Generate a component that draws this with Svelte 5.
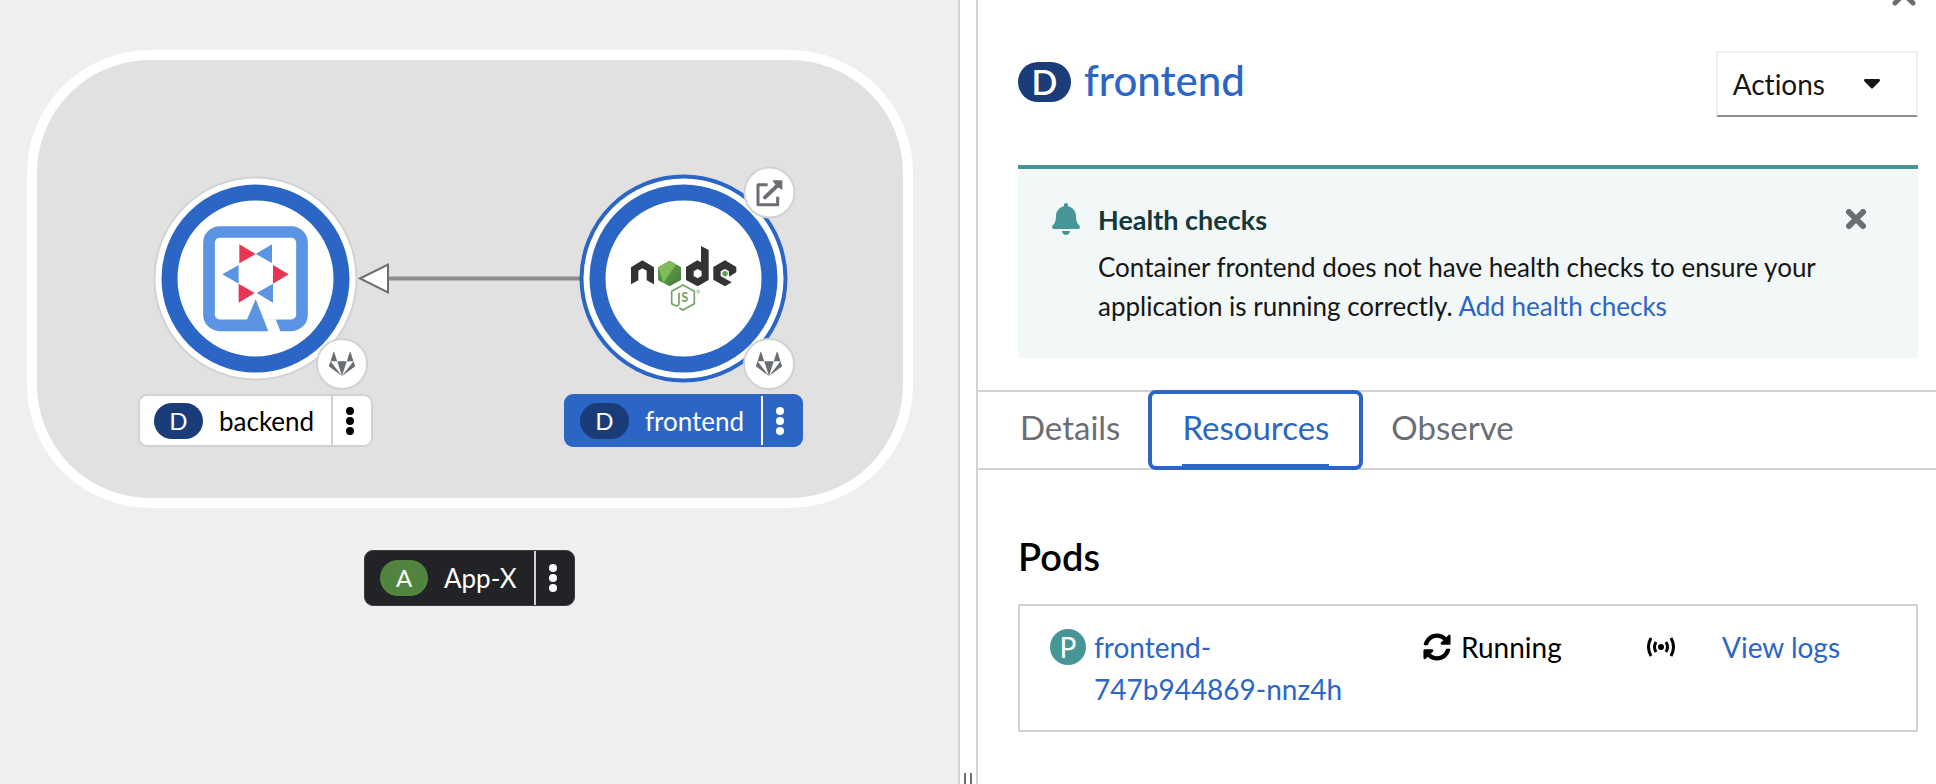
<script>
  const workloads = [
    { name: 'backend', kind: 'D', x: 138, y: 394, selected: false },
    { name: 'frontend', kind: 'D', x: 564, y: 394, selected: true }
  ];
  const sourceBadges = [
    { x: 342, y: 364 },
    { x: 769, y: 364 }
  ];
  const tabs = ['Details', 'Resources', 'Observe'];
  let active = $state('Resources');
</script>

{#snippet kebab()}
  <svg width="10" height="28" viewBox="0 0 10 28" aria-hidden="true">
    <circle cx="5" cy="4" r="4" /><circle cx="5" cy="14" r="4" /><circle cx="5" cy="24" r="4" />
  </svg>
{/snippet}

<div class="page">
  <main class="canvas" aria-label="Topology">
    <svg class="graph" width="958" height="784" viewBox="0 0 958 784" aria-hidden="true">
      <defs>
        <linearGradient id="leaf" x1="0" y1="0" x2="1" y2="1">
          <stop offset="0" stop-color="#6fae50" />
          <stop offset="1" stop-color="#3f7a3c" />
        </linearGradient>
      </defs>

      <rect x="32" y="55" width="876" height="448" rx="118" fill="#e1e1e1" stroke="#fff" stroke-width="10" />

      <path d="M388 278.500H582" stroke="#8a8d90" stroke-width="4" />
      <path d="M360 278.500L388 264.500V292.500Z" fill="#fff" stroke="#6a6e73" stroke-width="2" />

      <circle cx="255.500" cy="278.500" r="101" fill="#fff" stroke="#d2d2d2" stroke-width="2" />
      <circle cx="255.500" cy="278.500" r="86" fill="none" stroke="#2b65c6" stroke-width="16" />
      <g transform="translate(130 160) scale(.33333)">
        <rect x="237" y="216" width="279" height="280" rx="32" fill="none" stroke="#5b94e3" stroke-width="35" />
        <path d="M377 418L350 481L366 513H415Z" fill="#5b94e3" />
        <path d="M401 478H437L452 516H416Z" fill="#fff" />
        <path d="M328 253V310L377 282ZM429 315V371L476 343ZM326 371V428L374 399Z" fill="#ea3552" />
        <path d="M426 253V309L377 282ZM277 343L326 315V371ZM429 371V428L380 399Z" fill="#5b94e3" />
      </g>

      <circle cx="683.500" cy="278.500" r="102" fill="#fff" stroke="#2b65c6" stroke-width="4" />
      <circle cx="683.500" cy="278.500" r="86" fill="none" stroke="#2b65c6" stroke-width="16" />
      <g transform="translate(550 150) scale(.33333)">
        <g fill="#333">
          <path d="M243 352L277 331L312 352V403L290 391V362L277 355L265 362V391L243 403Z" />
          <path fill-rule="evenodd" d="M453 288L476 300V390L443 409L408 390V351L442 331L453 337ZM443 357L431 364V378L443 385L455 378V364Z" />
          <path d="M525 331L559 351V367L537 380V364L525 357L512 364V378L545 397L525 409L490 389V351Z" />
        </g>
        <path d="M525 362L533 366V375L525 380L517 375V366Z" fill="#5fa04e" />
        <path d="M359 332L393 351V390L359 409L325 390V351Z" fill="url(#leaf)" />
        <path d="M359 332L378 343L340 399L325 390V351Z" fill="#80bd5a" />
        <path d="M325 351L340 399L325 390Z" fill="#4f8f45" />
        <path d="M388 474L399 480L433 461V424L399 405L365 424V461L374 466Q387 471 387 458V428" fill="none" stroke="#6ea561" stroke-width="5" />
        <text x="394" y="457" font-size="38" font-weight="700" fill="#6ea561">S</text>
        <text x="438" y="431" font-size="16" fill="#6ea561">®</text>
      </g>

      <circle cx="769.500" cy="192.500" r="25" fill="#fff" stroke="#d2d2d2" stroke-width="2" />
      <g transform="translate(550 150) scale(.33333)">
        <path d="M653 104H624V164H683V140" fill="none" stroke="#6a6e73" stroke-width="9" stroke-linejoin="round" />
        <path d="M645 142L686 103" stroke="#6a6e73" stroke-width="12" stroke-linecap="round" />
        <path d="M668 91H697V119L686 113L672 99Z" fill="#6a6e73" />
      </g>

      {#each sourceBadges as b}
        <circle cx={b.x} cy={b.y} r="25" fill="#fff" stroke="#d2d2d2" stroke-width="2" />
        <svg x={b.x - 13} y={b.y - 13} width="26" height="26" viewBox="0 0 512 512">
          <path fill="#6a6e73" d="M105.200 24.900c-3.100-8.900-15.700-8.900-18.900 0L29.800 199.700h132c-.1 0-56.600-174.800-56.600-174.800zM.9 287.700c-2.600 8 .3 16.900 7.100 22l247.900 184-226.200-294zm160.800-88l94.300 294 94.300-294zm349.400 88l-28.800-88-226.300 294 247.900-184c6.900-5.100 9.700-14 7.200-22zM425.700 24.900c-3.100-8.900-15.700-8.900-18.900 0l-56.600 174.800h132z" />
        </svg>
      {/each}
    </svg>

    {#each workloads as w}
      <div class="node-label" class:selected={w.selected} style="left:{w.x}px;top:{w.y}px">
        <span class="pill">{w.kind}</span>
        <span class="name">{w.name}</span>
        <button class="kebab" aria-label="{w.name} actions">{@render kebab()}</button>
      </div>
    {/each}
    <div class="node-label app" style="left:364px;top:550px">
      <span class="pill">A</span>
      <span class="name">App-X</span>
      <button class="kebab" aria-label="App-X actions">{@render kebab()}</button>
    </div>
  </main>

  <div class="splitter" role="separator"><i></i><i></i></div>

  <aside class="panel">
    <div class="close-row">
      <button aria-label="Close">
        <svg width="24" height="24" viewBox="0 0 24 24"><path d="M3 3L21 21M21 3L3 21" stroke="#6a6e73" stroke-width="5" stroke-linecap="round" /></svg>
      </button>
    </div>

    <header>
      <h1><span class="pill large">D</span><a href="#frontend">frontend</a></h1>
      <button class="actions">
        Actions
        <svg width="16" height="10" viewBox="0 0 16 10" aria-hidden="true"><path d="M1 0H15Q17 1 15 3L9 9Q8 10 7 9L1 3Q-1 1 1 0Z" fill="#151515" /></svg>
      </button>
    </header>

    <section class="alert">
      <svg width="28" height="32" viewBox="0 0 448 512" aria-hidden="true"><path fill="#469597" d="M224 512c35.320 0 63.970-28.650 63.970-64H160.030c0 35.350 28.650 64 63.970 64zm215.390-149.710c-19.320-20.760-55.470-51.990-55.470-154.290 0-77.700-54.480-139.900-127.940-155.160V32c0-17.670-14.320-32-31.980-32s-31.980 14.330-31.980 32v20.840C118.560 68.100 64.080 130.300 64.080 208c0 102.300-36.150 133.530-55.470 154.290-6 6.450-8.660 14.160-8.610 21.710.11 16.400 12.980 32 32.100 32h383.800c19.120 0 32-15.600 32.100-32 .05-7.550-2.610-15.270-8.610-21.710z" /></svg>
      <div class="alert-text">
        <h2>Health checks</h2>
        <p>Container frontend does not have health checks to ensure your application is running correctly. <a href="#health">Add health checks</a></p>
      </div>
      <button aria-label="Dismiss alert">
        <svg width="20" height="20" viewBox="0 0 20 20"><path d="M3 3L17 17M17 3L3 17" stroke="#6a6e73" stroke-width="6" stroke-linecap="round" /></svg>
      </button>
    </section>

    <div class="tabs" role="tablist">
      {#each tabs as t}
        <button role="tab" aria-selected={active === t} class:active={active === t} onclick={() => (active = t)}><span>{t}</span></button>
      {/each}
    </div>

    <section class="pods">
      <h2>Pods</h2>
      <div class="pod">
        <div class="pod-name"><span class="pod-icon">P</span><a href="#pod">frontend-<br />747b944869-nnz4h</a></div>
        <div class="status">
          <svg width="28" height="28" viewBox="0 0 512 512" aria-hidden="true"><path d="M370.720 133.280C339.458 104.008 298.888 87.962 255.848 88c-77.458.068-144.328 53.178-162.791 126.850-1.344 5.363-6.122 9.150-11.651 9.150H24.103c-7.498 0-13.194-6.807-11.807-14.176C33.933 94.924 134.813 8 256 8c66.448 0 126.791 26.136 171.315 68.685L463.030 40.970C478.149 25.851 504 36.559 504 57.941V192c0 13.255-10.745 24-24 24H345.941c-21.382 0-32.090-25.851-16.971-40.971l41.750-41.749zM32 296h134.059c21.382 0 32.090 25.851 16.971 40.971l-41.750 41.750c31.262 29.273 71.835 45.319 114.876 45.280 77.418-.07 144.315-53.144 162.787-126.849 1.344-5.363 6.122-9.150 11.651-9.150h57.304c7.498 0 13.194 6.807 11.807 14.176C478.067 417.076 377.187 504 256 504c-66.448 0-126.791-26.136-171.315-68.685L48.970 471.030C33.851 486.149 8 475.441 8 454.059V320c0-13.255 10.745-24 24-24z" /></svg>
          Running
        </div>
        <svg class="signal" width="28" height="20" viewBox="0 0 28 20" aria-label="Receiving traffic">
          <circle cx="14" cy="10" r="3" />
          <path d="M4 1Q-1 10 4 19M24 1Q29 10 24 19M9 5Q6 10 9 15M19 5Q22 10 19 15" fill="none" stroke="#000" stroke-width="3" />
        </svg>
        <a href="#logs">View logs</a>
      </div>
    </section>
  </aside>
</div>

<style>
  :global(body) {
    margin: 0;
    background: #fff;
  }
  .page {
    display: grid;
    grid-template-columns: minmax(0, 1fr) 20px minmax(0, 1fr);
    min-height: 100vh;
    font-family: Lato, sans-serif;
    font-size: 28px;
    font-variant-ligatures: none;
    color: #151515;
  }
  button {
    font: inherit;
    font-variant-ligatures: none;
    color: inherit;
    background: none;
    border: 0;
    padding: 0;
    margin: 0;
    cursor: pointer;
  }
  button svg {
    display: block;
  }
  a {
    color: #2b65c6;
    text-decoration: none;
  }
  h1,
  h2,
  p {
    margin: 0;
  }
  .canvas {
    position: relative;
    overflow: hidden;
    background: #efefef;
  }
  .graph {
    display: block;
  }
  .node-label {
    position: absolute;
    display: flex;
    align-items: center;
    box-sizing: border-box;
    height: 53px;
    padding-left: 14px;
    background: #fff;
    border: 2px solid #d2d2d2;
    border-radius: 9px;
    font-size: 26px;
    color: #000;
    white-space: nowrap;
  }
  .pill {
    width: 49px;
    height: 36px;
    border-radius: 18px;
    background: #1a3d7a;
    color: #fff;
    font-size: 24px;
    line-height: 36px;
    text-align: center;
  }
  .name {
    padding: 0 17px 0 16px;
  }
  .kebab {
    align-self: stretch;
    padding: 0 16px 0 12px;
    border-left: 2px solid #d2d2d2;
  }
  .selected {
    background: #2b65c6;
    border-color: #2b65c6;
    color: #fff;
  }
  .selected .kebab {
    border-color: #fff;
  }
  .kebab svg {
    fill: currentColor;
  }
  .app {
    height: 56px;
    padding-left: 15px;
    background: #222326;
    border: 1px solid #3c3d40;
    color: #fff;
  }
  .app .pill {
    width: 48px;
    background: #51853f;
  }
  .splitter {
    display: flex;
    justify-content: center;
    align-items: flex-end;
    gap: 4px;
    box-sizing: border-box;
    border: solid #d2d2d2;
    border-width: 0 2px;
  }
  .splitter i {
    width: 2px;
    height: 11px;
    background: #6a6e73;
  }
  .panel {
    background: #fff;
  }
  .close-row {
    display: flex;
    justify-content: flex-end;
    align-items: flex-end;
    height: 6px;
    padding-right: 20px;
    overflow: hidden;
  }
  header {
    display: flex;
    justify-content: space-between;
    align-items: flex-start;
    padding: 45px 18px 48px 40px;
  }
  h1 {
    display: flex;
    align-items: center;
    gap: 13px;
    padding-top: 7px;
    font-size: 42px;
    font-weight: 500;
    line-height: 48px;
  }
  h1 a {
    line-height: 44px;
    padding-bottom: 4px;
  }
  .pill.large {
    width: 53px;
    height: 40px;
    border-radius: 20px;
    font-size: 34px;
    line-height: 40px;
    font-weight: 600;
  }
  .actions {
    display: flex;
    align-items: center;
    gap: 39px;
    height: 66px;
    padding: 0 36px 0 15px;
    border: 2px solid #f0f0f0;
    border-bottom-color: #8a8d90;
  }
  .alert {
    display: flex;
    align-items: flex-start;
    margin: 0 18px 0 40px;
    padding: 34px 52px 24px 34px;
    border-top: 4px solid #469597;
    background: #f2f8f8;
  }
  .alert-text {
    flex: 1;
    padding: 0 20px 0 18px;
    font-size: 26px;
    line-height: 39px;
  }
  .alert h2 {
    margin-bottom: 11px;
    font-size: 27px;
    line-height: 34px;
    font-weight: 700;
    color: #14383a;
  }
  .alert p {
    min-height: 86px;
  }
  .alert button {
    margin-top: 6px;
  }
  .tabs {
    display: flex;
    gap: 8px;
    height: 76px;
    margin-top: 32px;
    padding-left: 22px;
    border: solid #d2d2d2;
    border-width: 2px 0;
    font-size: 33px;
    color: #6a6e73;
  }
  .tabs button {
    display: flex;
    margin: -2px 0;
    padding: 0 20px;
  }
  .tabs span {
    display: flex;
    align-items: center;
    padding-bottom: 6px;
  }
  .tabs .active {
    padding: 0 30px;
    border: 4px solid #2b65c6;
    border-radius: 8px;
    background: #fff;
    color: #2b65c6;
  }
  .tabs .active span {
    padding-bottom: 4px;
    border-bottom: 2px solid #2b65c6;
  }
  .pods {
    padding: 62px 18px 0 40px;
  }
  .pods h2 {
    padding-bottom: 24px;
    font-size: 38px;
    font-weight: 600;
    line-height: 48px;
    color: #000;
  }
  .pod {
    display: grid;
    grid-template-columns: 373fr 224fr 75fr 194fr;
    align-items: start;
    padding: 20px 0 20px 30px;
    border: 2px solid #d2d2d2;
    line-height: 42px;
    color: #000;
  }
  .pod-name,
  .status {
    display: flex;
    align-items: flex-start;
    gap: 8px;
  }
  .pod-icon {
    width: 36px;
    height: 36px;
    margin-top: 3px;
    border-radius: 50%;
    background: #469597;
    color: #fff;
    line-height: 36px;
    text-align: center;
  }
  .status {
    gap: 10px;
  }
  .status svg {
    margin-top: 7px;
  }
  .signal {
    margin-top: 11px;
  }
</style>
